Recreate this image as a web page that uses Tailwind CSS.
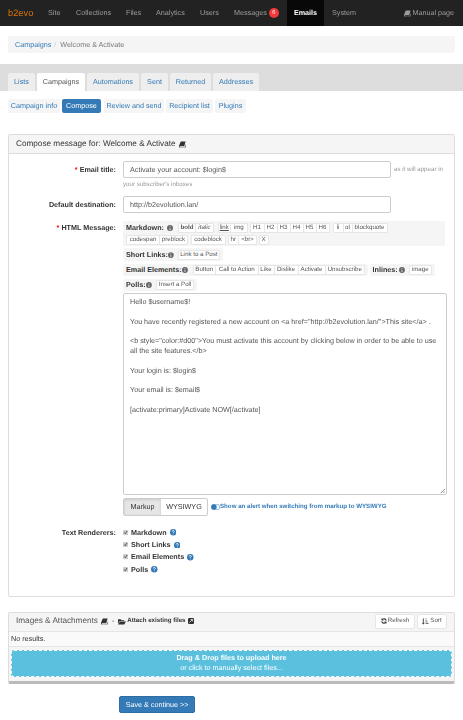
<!DOCTYPE html>
<html lang="en">
<head>
    <meta charset="UTF-8">
    <title>Emails - b2evo</title>
    <script src="https://cdn.jsdelivr.net/npm/@tailwindcss/browser@4"></script>
</head>
<body class="bg-white font-['Liberation_Sans',sans-serif] text-[7.2px] leading-[10px] text-[#333] h-[720px] overflow-hidden whitespace-nowrap [text-rendering:geometricPrecision] blur-[0.4px]">
    <!-- Top menu -->
    <nav class="h-[26px] bg-[#222] flex items-center text-[#9d9d9d] pl-2 pr-[9px]">
        <span class="text-[#d9730d] text-[9.300px] w-[40px]">b2evo</span>
        <span class="w-[28px]">Site</span>
        <span class="w-[50px]">Collections</span>
        <span class="w-[30px]">Files</span>
        <span class="w-[44px]">Analytics</span>
        <span class="w-[34px]">Users</span>
        <span class="flex items-center w-[53px]">Messages<span class="ml-[2px] w-[10px] h-[10px] rounded-full bg-[#f03a3a] text-white text-[5.700px] flex items-center justify-center">6</span></span>
        <span class="h-full w-[37px] bg-[#080808] text-white font-bold flex items-center justify-center">Emails</span>
        <span class="ml-2 flex-1">System</span>
        <span class="flex items-center gap-[1px]">
            <svg class="w-[7px] h-[7px] fill-[#9d9d9d]" viewBox="0 0 16 16"><path d="M4 1h11l-3 11H2.500a1 1 0 0 0 0 2H13l2-8v9H2a2 2 0 0 1-2-2V11z"/></svg>Manual page
        </span>
    </nav>

    <!-- Breadcrumb -->
    <div class="mx-2 mt-[10px] h-[17px] bg-[#f5f5f5] rounded-[2px] flex items-center px-[7px]">
        <a class="text-[#337ab7]">Campaigns</a><span class="text-[#ccc] mx-[3px]">/</span><span class="text-[#777] ml-[1px]">Welcome &amp; Activate</span>
    </div>

    <!-- Tabs -->
    <div class="mt-[11px] h-[27px] bg-[#ddd] flex items-end px-2 gap-[2px]">
        <a class="h-[18px] w-[27px] bg-[#eee] text-[#337ab7] flex items-center justify-center rounded-t-[2px]">Lists</a>
        <a class="h-[18px] w-[48px] bg-white text-[#555] flex items-center justify-center rounded-t-[2px]">Campaigns</a>
        <a class="h-[18px] w-[52px] bg-[#eee] text-[#337ab7] flex items-center justify-center rounded-t-[2px]">Automations</a>
        <a class="h-[18px] w-[27px] bg-[#eee] text-[#337ab7] flex items-center justify-center rounded-t-[2px]">Sent</a>
        <a class="h-[18px] w-[41px] bg-[#eee] text-[#337ab7] flex items-center justify-center rounded-t-[2px]">Returned</a>
        <a class="h-[18px] w-[46px] bg-[#eee] text-[#337ab7] flex items-center justify-center rounded-t-[2px]">Addresses</a>
    </div>

    <!-- Sub tabs -->
    <div class="mt-[8px] mx-2 flex gap-[2px] h-[14px]">
        <a class="w-[52px] bg-[#f5f5f5] text-[#337ab7] rounded-[2px] flex items-center justify-center">Campaign info</a>
        <a class="w-[39px] bg-[#337ab7] text-white rounded-[2px] flex items-center justify-center">Compose</a>
        <a class="w-[60px] bg-[#f5f5f5] text-[#337ab7] rounded-[2px] flex items-center justify-center ml-[1px]">Review and send</a>
        <a class="w-[47px] bg-[#f5f5f5] text-[#337ab7] rounded-[2px] flex items-center justify-center">Recipient list</a>
        <a class="w-[31px] bg-[#f5f5f5] text-[#337ab7] rounded-[2px] flex items-center justify-center">Plugins</a>
    </div>

    <!-- Compose panel -->
    <section class="mt-[21px] mx-2 h-[463px] border border-[#ddd] rounded-[2px]">
        <header class="h-[19px] bg-[#f5f5f5] border-b border-[#ddd] flex items-center px-[7px] text-[8.200px] gap-[3px]">
            Compose message for: Welcome &amp; Activate
            <svg class="w-[7px] h-[7px] fill-[#333]" viewBox="0 0 16 16"><path d="M4 1h11l-3 11H2.500a1 1 0 0 0 0 2H13l2-8v9H2a2 2 0 0 1-2-2V11z"/></svg>
        </header>

        <div class="grid grid-cols-[107px_1fr] gap-x-[7px] pt-[7px]">
            <label class="font-bold text-right pt-[4px]"><span class="text-[#f00]">*</span> Email title:</label>
            <div>
                <div class="flex items-center">
                    <div class="w-[268px] h-[17px] border border-[#ccc] rounded-[2px] px-[6px] flex items-center text-[#555]">Activate your account: $login$</div>
                    <span class="ml-[3px] text-[6.170px] text-[#999]">as it will appear in</span>
                </div>
                <p class="text-[6.170px] text-[#999] mt-[3px] h-[8px] leading-[8px]">your subscriber's inboxes</p>
            </div>

            <label class="font-bold text-right pt-[4px] mt-[7px]">Default destination:</label>
            <div class="w-[268px] h-[17px] mt-[7px] border border-[#ccc] rounded-[2px] px-[6px] flex items-center text-[#555]">http://b2evolution.lan/</div>

            <label class="font-bold text-right pt-[2px] mt-[8px]"><span class="text-[#f00]">*</span> HTML Message:</label>
            <div class="mt-[8px] w-[324px]">
                <!-- Toolbars -->
                <div class="bg-[#f5f5f5] rounded-[2px] w-[322px] h-[25px] px-[3px] pt-[1px] text-[6.170px] leading-[8px] text-[#555]">
                    <div class="flex items-center h-[12px]">
                        <b class="text-[7.200px] text-[#333] w-[41px]">Markdown:</b>
                        <svg class="w-[6px] h-[6px] fill-[#666] mr-[5px]" viewBox="0 0 16 16"><path d="M8 0a8 8 0 1 0 0 16A8 8 0 0 0 8 0zM7 3h2v2H7zM6 7h3v5h1v1H6v-1h1V8H6z"/></svg>
                        <div class="flex text-center bg-white border border-[#e6e6e6] rounded-[1px] mr-[3.500px]"><b class="w-[16px]">bold</b><i class="w-[18px] border-l border-[#e6e6e6]">italic</i></div>
                        <div class="flex text-center bg-white border border-[#e6e6e6] rounded-[1px] mr-[2px]"><u class="w-[11.500px]">link</u><span class="w-[16.500px] border-l border-[#e6e6e6]">img</span></div>
                        <div class="flex text-center bg-white border border-[#e6e6e6] rounded-[1px] mr-[3px]"><span class="w-[13px]">H1</span><span class="w-[13px] border-l border-[#e6e6e6]">H2</span><span class="w-[13px] border-l border-[#e6e6e6]">H3</span><span class="w-[13px] border-l border-[#e6e6e6]">H4</span><span class="w-[13px] border-l border-[#e6e6e6]">H5</span><span class="w-[13px] border-l border-[#e6e6e6]">H6</span></div>
                        <div class="flex text-center bg-white border border-[#e6e6e6] rounded-[1px]"><span class="w-[9px]">li</span><span class="w-[9px] border-l border-[#e6e6e6]">ol</span><span class="w-[35px] border-l border-[#e6e6e6]">blockquote</span></div>
                    </div>
                    <div class="flex items-center h-[12px]">
                        <div class="flex text-center bg-white border border-[#e6e6e6] rounded-[1px] mr-[2.500px]"><span class="w-[32px]">codespan</span><span class="w-[28px] border-l border-[#e6e6e6]">preblock</span></div>
                        <div class="flex text-center bg-white border border-[#e6e6e6] rounded-[1px] mr-[2px]"><span class="w-[33px]">codeblock</span></div>
                        <div class="flex text-center bg-white border border-[#e6e6e6] rounded-[1px] mr-[1.500px]"><span class="w-[9.500px]">hr</span><span class="w-[18px] border-l border-[#e6e6e6]">&lt;br&gt;</span></div>
                        <div class="flex text-center bg-white border border-[#e6e6e6] rounded-[1px]"><span class="w-[8px]">X</span></div>
                    </div>
                </div>
                <div class="mt-[2px] flex items-center bg-[#f5f5f5] rounded-[2px] w-[100px] h-[13px] px-[3px] text-[6.170px] leading-[8px] text-[#555]">
                    <b class="text-[7.200px] text-[#333] w-[43px]">Short Links:</b>
                    <svg class="w-[6px] h-[6px] fill-[#666] mr-[4px]" viewBox="0 0 16 16"><path d="M8 0a8 8 0 1 0 0 16A8 8 0 0 0 8 0zM7 3h2v2H7zM6 7h3v5h1v1H6v-1h1V8H6z"/></svg>
                    <div class="w-[44px] text-center bg-white border border-[#e6e6e6] rounded-[1px]">Link to a Post</div>
                </div>
                <div class="mt-[3px] flex gap-[1.500px] text-[6.170px] leading-[8px] text-[#555]">
                    <div class="flex items-center bg-[#f5f5f5] rounded-[2px] h-[12px] px-[3px] w-[245px]">
                        <b class="text-[7.200px] text-[#333] w-[57px]">Email Elements:</b>
                        <svg class="w-[6px] h-[6px] fill-[#666] mr-[4.500px]" viewBox="0 0 16 16"><path d="M8 0a8 8 0 1 0 0 16A8 8 0 0 0 8 0zM7 3h2v2H7zM6 7h3v5h1v1H6v-1h1V8H6z"/></svg>
                        <div class="flex text-center bg-white border border-[#e6e6e6] rounded-[1px]"><span class="w-[21.500px]">Button</span><span class="w-[42.500px] border-l border-[#e6e6e6]">Call to Action</span><span class="w-[16px] border-l border-[#e6e6e6]">Like</span><span class="w-[24px] border-l border-[#e6e6e6]">Dislike</span><span class="w-[27px] border-l border-[#e6e6e6]">Activate</span><span class="w-[39.500px] border-l border-[#e6e6e6]">Unsubscribe</span></div>
                    </div>
                    <div class="flex items-center bg-[#f5f5f5] rounded-[2px] h-[12px] px-[3px] w-[65px]">
                        <b class="text-[7.200px] text-[#333] w-[27px]">Inlines:</b>
                        <svg class="w-[6px] h-[6px] fill-[#666] mr-[4px]" viewBox="0 0 16 16"><path d="M8 0a8 8 0 1 0 0 16A8 8 0 0 0 8 0zM7 3h2v2H7zM6 7h3v5h1v1H6v-1h1V8H6z"/></svg>
                        <div class="w-[23px] text-center bg-white border border-[#e6e6e6] rounded-[1px]">image</div>
                    </div>
                </div>
                <div class="mt-[3px] flex items-center bg-[#f5f5f5] rounded-[2px] w-[74px] h-[12px] px-[3px] text-[6.170px] leading-[8px] text-[#555]">
                    <b class="text-[7.200px] text-[#333] w-[21px]">Polls:</b>
                    <svg class="w-[6px] h-[6px] fill-[#666] mr-[4px]" viewBox="0 0 16 16"><path d="M8 0a8 8 0 1 0 0 16A8 8 0 0 0 8 0zM7 3h2v2H7zM6 7h3v5h1v1H6v-1h1V8H6z"/></svg>
                    <div class="w-[39px] text-center bg-white border border-[#e6e6e6] rounded-[1px]">Insert a Poll</div>
                </div>

                <!-- Message body -->
                <div class="mt-[2px] w-[324px] h-[202px] border border-[#ccc] rounded-[2px] px-[6px] pt-[3px] text-[#555] leading-[9.800px] relative whitespace-normal">
                    <p>Hello $username$!</p>
                    <p class="mt-[9.800px]">You have recently registered a new account on &lt;a href="http://b2evolution.lan/"&gt;This site&lt;/a&gt; .</p>
                    <p class="mt-[9.800px]">&lt;b style="color:#d00"&gt;You must activate this account by clicking below in order to be able to use all the site features.&lt;/b&gt;</p>
                    <p class="mt-[9.800px]">Your login is: $login$</p>
                    <p class="mt-[9.800px]">Your email is: $email$</p>
                    <p class="mt-[9.800px]">[activate:primary]Activate NOW[/activate]</p>
                    <svg class="absolute right-[1px] bottom-[1px] w-[5px] h-[5px] stroke-[#777]" viewBox="0 0 6 6" fill="none"><path d="M1 6 6 1M4 6 6 4"/></svg>
                </div>

                <!-- Editor switch -->
                <div class="mt-[3px] flex items-center">
                    <div class="flex h-[18px] w-[85px] border border-[#ccc] rounded-[2px] text-[#333]">
                        <span class="w-[37px] bg-[#e6e6e6] shadow-[inset_0_1px_3px_rgba(0,0,0,0.125)] flex items-center justify-center">Markup</span>
                        <span class="flex-1 flex items-center justify-center">WYSIWYG</span>
                    </div>
                    <span class="ml-[3px] flex items-center text-[#337ab7] font-bold text-[6.170px]">
                        <svg class="w-[9px] h-[6px]" viewBox="0 0 18 12"><rect x="0.500" y="0.500" width="17" height="11" rx="5.500" fill="none" stroke="#337ab7"/><circle cx="6" cy="6" r="5.500" fill="#337ab7"/></svg>Show an alert when switching from markup to WYSIWYG
                    </span>
                </div>
            </div>

            <label class="font-bold text-right mt-[11px] pt-[1px]">Text Renderers:</label>
            <div class="mt-[11px] font-bold flex flex-col gap-[1.400px]">
                <div class="flex items-center h-[11px]"><svg class="w-[5px] h-[5px] mr-[3px] mb-[1px]" viewBox="0 0 10 10"><rect width="10" height="10" rx="1" fill="#ccc"/><path d="M2.500 5 4.500 7.500 8 2" stroke="#333" stroke-width="1.500" fill="none"/></svg>Markdown<svg class="w-[6.500px] h-[6.500px] ml-[3px]" viewBox="0 0 16 16"><circle cx="8" cy="8" r="8" fill="#337ab7"/><path d="M5.500 6a2.500 2.500 0 1 1 3.500 2.300C8.300 8.700 8 9 8 10M8 11.500v1.500" stroke="#fff" stroke-width="2" fill="none"/></svg></div>
                <div class="flex items-center h-[11px]"><svg class="w-[5px] h-[5px] mr-[3px] mb-[1px]" viewBox="0 0 10 10"><rect width="10" height="10" rx="1" fill="#ccc"/><path d="M2.500 5 4.500 7.500 8 2" stroke="#333" stroke-width="1.500" fill="none"/></svg>Short Links<svg class="w-[6.500px] h-[6.500px] ml-[3px]" viewBox="0 0 16 16"><circle cx="8" cy="8" r="8" fill="#337ab7"/><path d="M5.500 6a2.500 2.500 0 1 1 3.500 2.300C8.300 8.700 8 9 8 10M8 11.500v1.500" stroke="#fff" stroke-width="2" fill="none"/></svg></div>
                <div class="flex items-center h-[11px]"><svg class="w-[5px] h-[5px] mr-[3px] mb-[1px]" viewBox="0 0 10 10"><rect width="10" height="10" rx="1" fill="#ccc"/><path d="M2.500 5 4.500 7.500 8 2" stroke="#333" stroke-width="1.500" fill="none"/></svg>Email Elements<svg class="w-[6.500px] h-[6.500px] ml-[3px]" viewBox="0 0 16 16"><circle cx="8" cy="8" r="8" fill="#337ab7"/><path d="M5.500 6a2.500 2.500 0 1 1 3.500 2.300C8.300 8.700 8 9 8 10M8 11.500v1.500" stroke="#fff" stroke-width="2" fill="none"/></svg></div>
                <div class="flex items-center h-[11px]"><svg class="w-[5px] h-[5px] mr-[3px] mb-[1px]" viewBox="0 0 10 10"><rect width="10" height="10" rx="1" fill="#ccc"/><path d="M2.500 5 4.500 7.500 8 2" stroke="#333" stroke-width="1.500" fill="none"/></svg>Polls<svg class="w-[6.500px] h-[6.500px] ml-[3px]" viewBox="0 0 16 16"><circle cx="8" cy="8" r="8" fill="#337ab7"/><path d="M5.500 6a2.500 2.500 0 1 1 3.500 2.300C8.300 8.700 8 9 8 10M8 11.500v1.500" stroke="#fff" stroke-width="2" fill="none"/></svg></div>
            </div>
        </div>
    </section>

    <!-- Attachments panel -->
    <section class="mt-[15px] mx-2 h-[72px] border border-[#ddd] border-b-[3px] border-b-[#bbb] bg-[#f5f5f5] rounded-[2px]">
        <header class="h-[19px] flex items-center pl-[7px] pr-[7px] pb-[2px] border-b border-[#e6e6e6]">
            <span class="text-[8.200px] text-[#555]">Images &amp; Attachments</span>
            <svg class="w-[7px] h-[7px] fill-[#333] ml-[3px]" viewBox="0 0 16 16"><path d="M4 1h11l-3 11H2.500a1 1 0 0 0 0 2H13l2-8v9H2a2 2 0 0 1-2-2V11z"/></svg>
            <span class="mx-[4px]">-</span>
            <svg class="w-[8px] h-[7px] fill-[#333] mr-[1px]" viewBox="0 0 18 14"><path d="M0 2h6l2 2h6v2H4L0 12zM4.500 7H18l-4 7H0z"/></svg>
            <b class="text-[6.170px]">Attach existing files</b>
            <svg class="w-[6px] h-[6px] ml-[2px]" viewBox="0 0 16 16"><rect width="16" height="16" rx="3" fill="#333"/><path d="M4 12 11 5M7 4h5v5" stroke="#fff" stroke-width="2" fill="none"/></svg>
            <span class="ml-auto flex gap-[2px] text-[6.170px] text-[#555]">
                <span class="h-[15px] w-[40px] bg-white border border-[#e6e6e6] rounded-[2px] flex items-center justify-center">
                    <svg class="w-[6px] h-[6px] stroke-[#333] mr-[1px]" viewBox="0 0 16 16" fill="none" stroke-width="3"><path d="M14 7a6 6 0 0 0-11-2M2 9a6 6 0 0 0 11 2"/><path d="M2 1v5h5M14 15v-5H9" stroke-width="1.500"/></svg>Refresh
                </span>
                <span class="h-[15px] w-[30px] bg-white border border-[#e6e6e6] rounded-[2px] flex items-center justify-center gap-[1px]">
                    <svg class="w-[7px] h-[7px] stroke-[#333]" viewBox="0 0 16 16" fill="none" stroke-width="2"><path d="M3 1v13M1 11l2 3 2-3M8 2h2M8 7h4M8 12h7"/></svg>Sort
                </span>
            </span>
        </header>
        <div class="h-[15px] bg-white/50 px-[2px] flex items-center border-b border-[#e6e6e6]">No results.</div>
        <div class="mx-[2px] mt-[3px] h-[27px] bg-[#5bc0de] border border-dashed border-white rounded-[3px] text-white text-center pt-[2px] leading-[10px]">
            <b>Drag &amp; Drop files to upload here</b><br>or click to manually select files...
        </div>
    </section>

    <div class="mt-[12px] ml-[119px] w-[76px] h-[17px] bg-[#337ab7] border border-[#2e6da4] rounded-[2px] text-white flex items-center justify-center">Save &amp; continue &gt;&gt;</div>
</body>
</html>
